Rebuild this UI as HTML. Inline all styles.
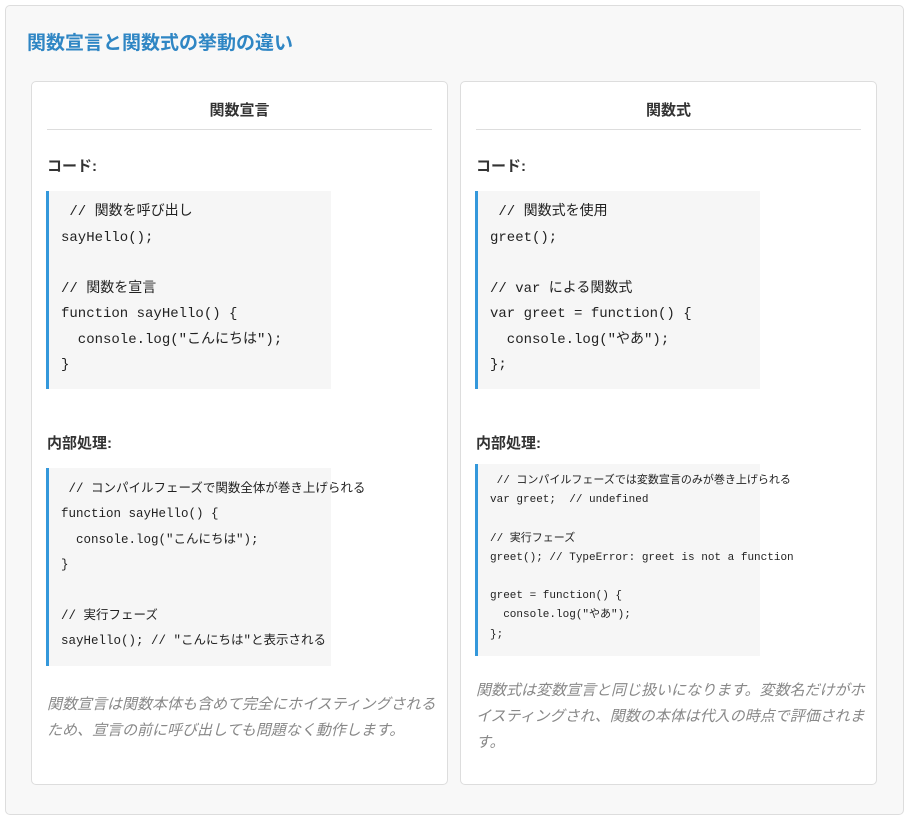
<!DOCTYPE html>
<html><head><meta charset="utf-8"><style>
body{margin:0;background:#fff;font-family:"Liberation Sans","Noto Sans CJK JP",sans-serif;}
.outer{position:absolute;left:5px;top:5px;width:897px;height:808px;background:#f8f8f8;border:1px solid #ddd;border-radius:5px;}
h1{position:absolute;left:21px;top:22px;margin:0;font-size:19px;color:#2f86c4;font-weight:bold;}
.card{position:absolute;top:75px;width:415px;height:702px;background:#fff;border:1px solid #ddd;border-radius:5px;}
.card h2{position:absolute;left:15px;right:15px;top:10px;margin:0;text-align:center;font-size:15px;color:#333;font-weight:bold;padding-bottom:10px;border-bottom:1px solid #ddd;height:37px;line-height:37px;padding-bottom:0;}
.lbl{position:absolute;left:15px;font-size:15px;font-weight:bold;color:#333;}
pre{position:absolute;left:14px;width:285px;margin:0;background:#f6f6f6;border-left:3px solid #3498db;padding:0 0 0 12px;font-family:"Liberation Mono","Noto Sans CJK JP",monospace;color:#222;white-space:pre;overflow:visible;}
.p{position:absolute;left:15px;width:392px;font-size:15px;line-height:26px;color:#888;font-style:italic;margin:0;}
</style></head><body>
<div class="outer">
<h1>関数宣言と関数式の挙動の違い</h1>
<div class="card" style="left:25px;">
<h2>関数宣言</h2>
<div class="lbl" style="top:73px;">コード:</div>
<pre style="top:109px;height:198px;font-size:14px;line-height:25.5px;padding-top:9px;box-sizing:border-box;"> // 関数を呼び出し
sayHello();

// 関数を宣言
function sayHello() {
  console.log("こんにちは");
}</pre>
<div class="lbl" style="top:350px;">内部処理:</div>
<pre style="top:386px;height:198px;font-size:12.5px;line-height:25.4px;padding-top:9px;box-sizing:border-box;"> // コンパイルフェーズで関数全体が巻き上げられる
function sayHello() {
  console.log("こんにちは");
}

// 実行フェーズ
sayHello(); // "こんにちは"と表示される</pre>
<p class="p" style="top:610px;">関数宣言は関数本体も含めて完全にホイスティングされるため、宣言の前に呼び出しても問題なく動作します。</p>
</div>
<div class="card" style="left:454px;">
<h2>関数式</h2>
<div class="lbl" style="top:73px;">コード:</div>
<pre style="top:109px;height:198px;font-size:14px;line-height:25.5px;padding-top:9px;box-sizing:border-box;"> // 関数式を使用
greet();

// var による関数式
var greet = function() {
  console.log("やあ");
};</pre>
<div class="lbl" style="top:350px;">内部処理:</div>
<pre style="top:382px;height:192px;font-size:11px;line-height:19.2px;padding-top:8px;box-sizing:border-box;"> // コンパイルフェーズでは変数宣言のみが巻き上げられる
var greet;  // undefined

// 実行フェーズ
greet(); // TypeError: greet is not a function

greet = function() {
  console.log("やあ");
};</pre>
<p class="p" style="top:596px;">関数式は変数宣言と同じ扱いになります。変数名だけがホイスティングされ、関数の本体は代入の時点で評価されます。</p>
</div>
</div>
</body></html>
